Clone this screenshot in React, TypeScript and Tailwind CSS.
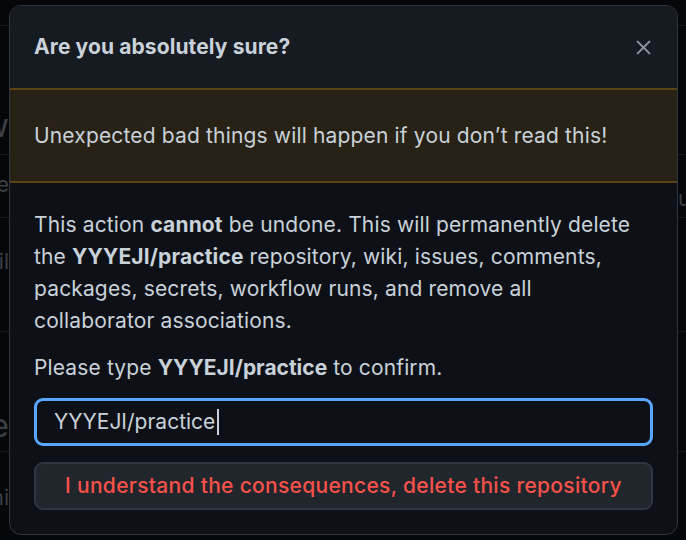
import React from "react";

function BgRow({ h, left, right, leftCls = "", rightCls = "" }: { h: string; left?: string; right?: string; leftCls?: string; rightCls?: string }) {
  return (
    <div className={`flex border-b border-[#15191f] ${h}`}>
      <div className="flex w-[9px] shrink-0 justify-end overflow-hidden">
        {left && <span className={`whitespace-nowrap text-[#3b4047] ${leftCls}`}>{left}</span>}
      </div>
      <div className="flex-1" />
      <div className="flex w-[8px] shrink-0 overflow-hidden">
        {right && <span className={`whitespace-nowrap text-[#3b4047] ${rightCls}`}>{right}</span>}
      </div>
    </div>
  );
}

export default function App() {
  return (
    <div
      className="relative h-[540px] w-[686px] overflow-hidden bg-[#05070a]"
      style={{ fontFamily: "Inter, 'Noto Sans', 'Liberation Sans', sans-serif" }}
    >
      {/* background page */}
      <div className="flex flex-col text-[21px]">
        <BgRow h="h-[26px]" />
        <BgRow h="h-[129px]" left="Overview" leftCls="mt-[84px] text-[32px] leading-none" />
        <BgRow h="h-[63px]" left="Rename" leftCls="mt-[14px] leading-[32px]" right="u" rightCls="mt-[28px] leading-[32px]" />
        <BgRow h="h-[114px]" left="Visibil" leftCls="mt-[28px] leading-[32px]" />
        <BgRow h="h-[120px]" left="Delete" leftCls="mt-[78px] text-[32px] leading-[32px]" />
        <BgRow h="h-[90px]" left="Admini" leftCls="mt-[30px] leading-[32px]" />
      </div>

      {/* dialog */}
      <div className="absolute left-[9px] top-[5px] flex w-[669px] flex-col overflow-hidden rounded-[12px] border border-[#30363d] bg-[#0d1117] text-[21px] leading-[32px] tracking-[0.14px] text-[#c9d1d9]">
        <div className="flex items-center justify-between bg-[#161b22] py-[25px] pl-[24px] pr-[26px]">
          <h1 className="font-bold tracking-[0.1px]">Are you absolutely sure?</h1>
          <svg width="15" height="15" viewBox="0 0 14 14" fill="none" stroke="#8b949e" strokeWidth="1.9" strokeLinecap="round">
            <path d="M1.5 1.5 L12.5 12.5 M12.5 1.5 L1.5 12.5" />
          </svg>
        </div>
        <div className="border-y-2 border-[#5c4514] bg-[#272215] px-[24px] py-[29.5px] tracking-[0.16px]">
          Unexpected bad things will happen if you don’t read this!
        </div>
        <div className="flex flex-col px-[24px] pb-[24px] pt-[26px]">
          <p>
            This action <strong className="font-bold">cannot</strong> be undone. This will permanently delete the{" "}
            <strong className="font-bold">YYYEJI/practice</strong> repository, wiki, issues, comments, packages, secrets,
            workflow runs, and remove all collaborator associations.
          </p>
          <p className="mt-[15px]">
            Please type <strong className="font-bold tracking-normal">YYYEJI/practice</strong> to confirm.
          </p>
          <div className="mt-[14px] flex h-[48px] items-center rounded-[9px] border-[3px] border-[#58a6ff] bg-[#0d1117] px-[17px] tracking-normal">
            <span>YYYEJI/practice</span>
            <span className="ml-[2px] h-[26px] w-[2px] bg-[#c9d1d9]" />
          </div>
          <button className="mt-[16px] flex h-[48px] items-center justify-center rounded-[9px] border-2 border-[#30363d] bg-[#21262d] font-medium tracking-[0.3px] text-[#f85149]">
            I understand the consequences, delete this repository
          </button>
        </div>
      </div>
    </div>
  );
}
